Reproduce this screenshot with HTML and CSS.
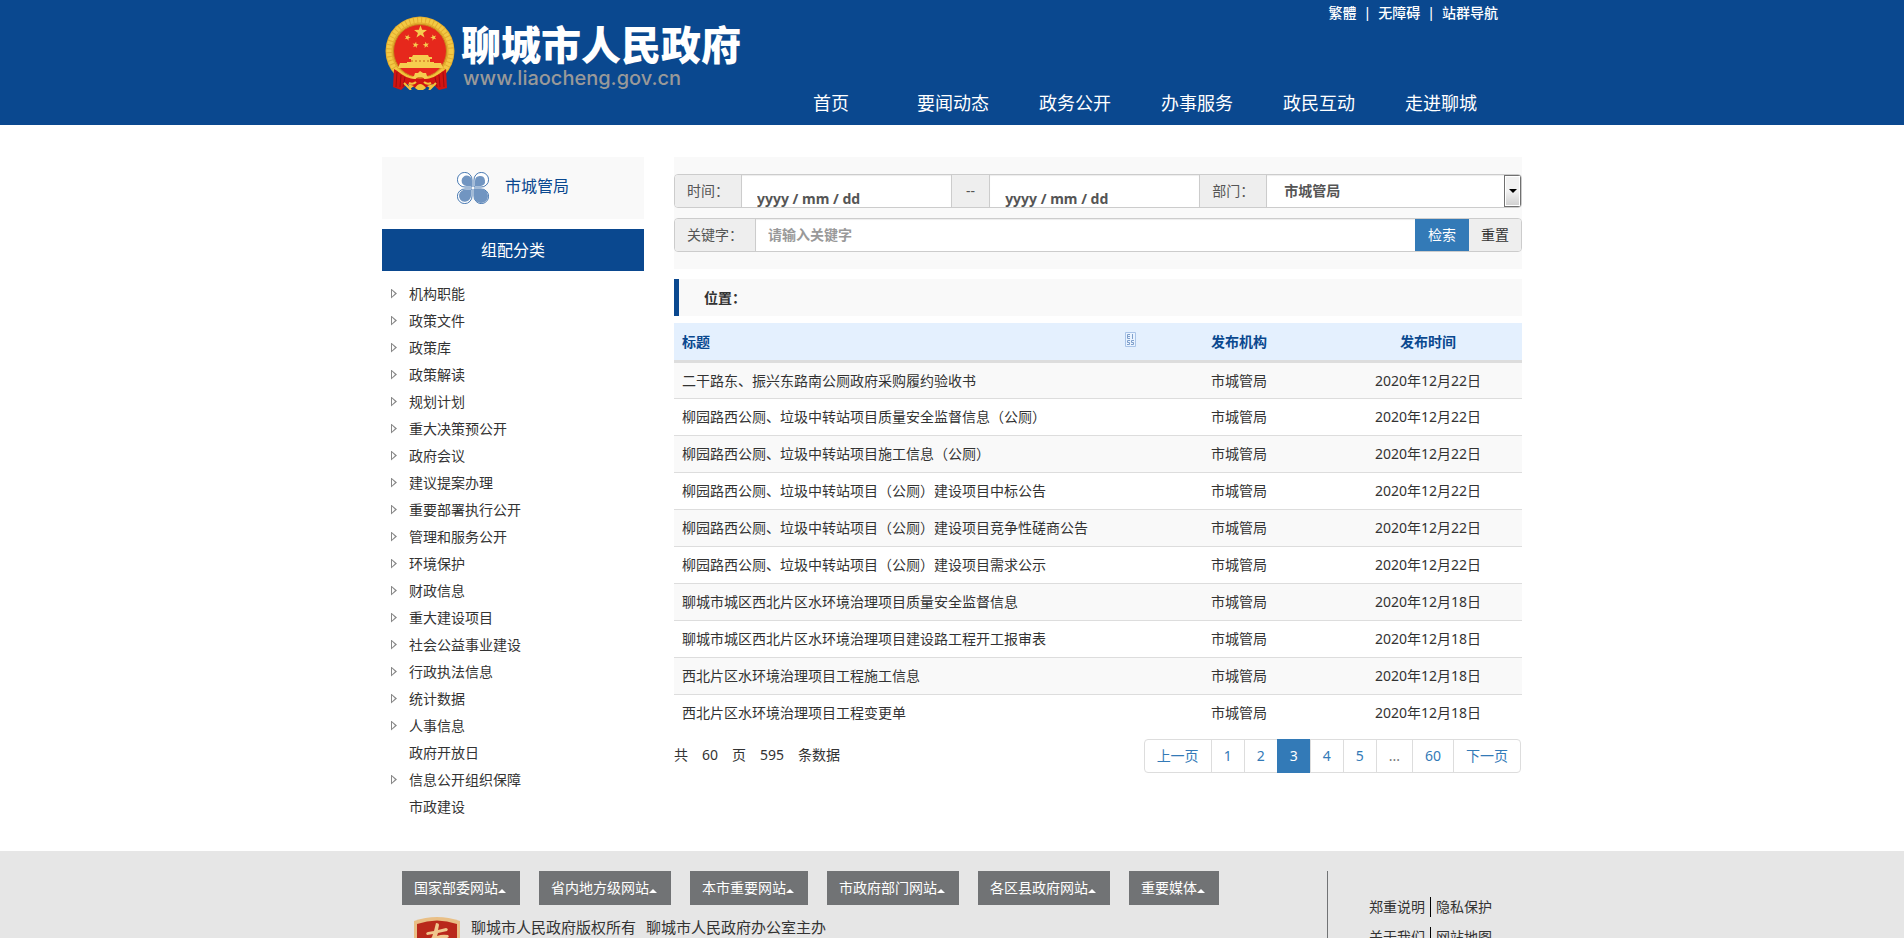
FILE: index.html
```html
<!DOCTYPE html>
<html lang="zh-CN">
<head>
    <meta charset="UTF-8">
    <meta name="viewport" content="width=device-width, initial-scale=1.0">
    <title>聊城市人民政府 - 市城管局</title>
    <link rel="stylesheet" href="styles.css">
</head>
<body>
    <header class="header">
        <div class="container header-inner">
            <a class="logo" href="#">
                <svg class="emblem" viewBox="0 0 70 74" aria-hidden="true">
                    <defs>
                        <path id="star" d="M0-10 2.4-3.2 9.5-3.1 3.8 1.3 5.9 8.1 0 4-5.9 8.1-3.8 1.3-9.5-3.1-2.4-3.2z"/>
                    </defs>
                    <circle cx="35" cy="35" r="34.5" fill="#e3ac2f"/>
                    <circle cx="35" cy="35" r="31" fill="none" stroke="#f3c944" stroke-width="5" stroke-dasharray="3 1"/>
                    <circle cx="35" cy="35" r="26.5" fill="#e6281c" stroke="#c98a1c"/>
                    <g fill="#f6cd4f">
                        <use href="#star" transform="translate(35.5 16) scale(.68)"/>
                        <use href="#star" transform="translate(22.5 21.5) rotate(20) scale(.33)"/>
                        <use href="#star" transform="translate(48.5 21.5) rotate(-20) scale(.33)"/>
                        <use href="#star" transform="translate(30.5 29) rotate(10) scale(.33)"/>
                        <use href="#star" transform="translate(41 29) rotate(-10) scale(.33)"/>
                        <path d="M28 39h15l1 2h3v2H24v-2h3zM26 43h19v3h4v2H22v-2h4zM15 47h41l2 5H13z"/>
                    </g>
                    <path d="M26 45h19" stroke="#c8601c" stroke-dasharray="2 2"/>
                    <path d="M9 53q6 4 13 7 13 5 27 0 7-3 12-7l1 19-8 2-6-6-13 6-13-6-6 6-8-3z" fill="#d11512"/>
                    <path d="M12 56l-1 15M16 59l-1 12M20 61l-2 10M58 56l1 15M54 59l1 12M50 61l2 10" stroke="#9d0e10"/>
                    <path d="M12 53q9 9 19 9M58 53q-9 9-19 9M24 67q4 2 7-1M46 67q-4 2-7-1M19 67l7 7M51 67l-7 7" fill="none" stroke="#f3c33c" stroke-width="2"/>
                    <path d="M29 60l1-3 3 0 2-2 3 2 3 0 1 3 2 2-4 1-3-2h-4l-3 2-4-1z" fill="#f6cd4f"/>
                    <path d="M30 72q5-8 11 0l-3 2h-5zM23 68l6 2-4 3zM48 68l-6 2 4 3z" fill="#f3c33c"/>
                </svg>
                <span class="logo-text">
                    <strong>聊城市人民政府</strong>
                    <em>www.liaocheng.gov.cn</em>
                </span>
            </a>
            <div class="header-right">
                <div class="top-links">
                    <a href="#">繁體</a><span>|</span><a href="#">无障碍</a><span>|</span><a href="#">站群导航</a>
                </div>
                <nav class="main-nav">
                    <a href="#">首页</a>
                    <a href="#">要闻动态</a>
                    <a href="#">政务公开</a>
                    <a href="#">办事服务</a>
                    <a href="#">政民互动</a>
                    <a href="#">走进聊城</a>
                </nav>
            </div>
        </div>
    </header>

    <div class="container content">
        <aside class="sidebar">
            <div class="dept">
                <svg class="clover" viewBox="0 0 32 32" aria-hidden="true">
                    <defs>
                        <g id="petal">
                            <path d="M15 15H8A7.3 7.3 0 1 1 15 8z" fill="#fff" stroke="#4b7bb3"/>
                        </g>
                    </defs>
                    <use href="#petal"/>
                    <use href="#petal" transform="matrix(-1 0 0 1 32 0)"/>
                    <use href="#petal" transform="matrix(1 0 0 -1 0 32)"/>
                    <use href="#petal" transform="matrix(-1 0 0 -1 32 32)"/>
                    <g fill="#7195c1">
                        <path d="M15 14H9.500A5.200 5.200 0 1 1 15 9z"/>
                        <path d="M18 14h6a5 5 0 1 0-6-5z"/>
                        <path d="M14 18H9.500A6 6 0 1 0 14 24z"/>
                        <path d="M17 17h7A7 7 0 1 1 17 24z"/>
                    </g>
                </svg>
                <span>市城管局</span>
            </div>
            <h2 class="side-title">组配分类</h2>
            <ul class="side-list">
                <li class="has-sub"><a href="#">机构职能</a></li>
                <li class="has-sub"><a href="#">政策文件</a></li>
                <li class="has-sub"><a href="#">政策库</a></li>
                <li class="has-sub"><a href="#">政策解读</a></li>
                <li class="has-sub"><a href="#">规划计划</a></li>
                <li class="has-sub"><a href="#">重大决策预公开</a></li>
                <li class="has-sub"><a href="#">政府会议</a></li>
                <li class="has-sub"><a href="#">建议提案办理</a></li>
                <li class="has-sub"><a href="#">重要部署执行公开</a></li>
                <li class="has-sub"><a href="#">管理和服务公开</a></li>
                <li class="has-sub"><a href="#">环境保护</a></li>
                <li class="has-sub"><a href="#">财政信息</a></li>
                <li class="has-sub"><a href="#">重大建设项目</a></li>
                <li class="has-sub"><a href="#">社会公益事业建设</a></li>
                <li class="has-sub"><a href="#">行政执法信息</a></li>
                <li class="has-sub"><a href="#">统计数据</a></li>
                <li class="has-sub"><a href="#">人事信息</a></li>
                <li><a href="#">政府开放日</a></li>
                <li class="has-sub"><a href="#">信息公开组织保障</a></li>
                <li><a href="#">市政建设</a></li>
            </ul>
        </aside>

        <main class="main">
            <form class="search">
                <div class="input-group">
                    <label class="addon" for="startDate">时间：</label>
                    <input class="date" type="text" id="startDate" placeholder="yyyy / mm / dd">
                    <label class="addon addon-to" for="endDate">--</label>
                    <input class="date" type="text" id="endDate" placeholder="yyyy / mm / dd">
                    <label class="addon" for="dept">部门：</label>
                    <div class="select-box">
                        <select id="dept">
                            <option>市城管局</option>
                        </select>
                        <span class="select-arrow"></span>
                    </div>
                </div>
                <div class="input-group">
                    <label class="addon" for="keyword">关键字：</label>
                    <input class="keyword" type="text" id="keyword" placeholder="请输入关键字">
                    <button class="btn-search" type="button">检索</button>
                    <button class="btn-reset" type="reset">重置</button>
                </div>
            </form>

            <div class="position">位置：</div>

            <table class="list">
                <thead>
                    <tr>
                        <th class="col-title">
                            <div class="th-title">
                                <span>标题</span>
                                <svg class="code-icon" viewBox="0 0 11 15" aria-hidden="true">
                                    <path d="M.5.500h10v14H.5z" fill="#e9f3ff" stroke="#a9c4e8"/>
                                    <path d="M5 2.500H2.500v4H5M2.500 4.500H5M7.500 2v5M5 8.500H2.500v2h2v2H2M9 8.500H6.500v2h2v2H6" fill="none" stroke="#7e9fcb"/>
                                </svg>
                            </div>
                        </th>
                        <th class="col-org">发布机构</th>
                        <th class="col-date">发布时间</th>
                    </tr>
                </thead>
                <tbody>
                    <tr><td><a href="#">二干路东、振兴东路南公厕政府采购履约验收书</a></td><td>市城管局</td><td>2020年12月22日</td></tr>
                    <tr><td><a href="#">柳园路西公厕、垃圾中转站项目质量安全监督信息（公厕）</a></td><td>市城管局</td><td>2020年12月22日</td></tr>
                    <tr><td><a href="#">柳园路西公厕、垃圾中转站项目施工信息（公厕）</a></td><td>市城管局</td><td>2020年12月22日</td></tr>
                    <tr><td><a href="#">柳园路西公厕、垃圾中转站项目（公厕）建设项目中标公告</a></td><td>市城管局</td><td>2020年12月22日</td></tr>
                    <tr><td><a href="#">柳园路西公厕、垃圾中转站项目（公厕）建设项目竞争性磋商公告</a></td><td>市城管局</td><td>2020年12月22日</td></tr>
                    <tr><td><a href="#">柳园路西公厕、垃圾中转站项目（公厕）建设项目需求公示</a></td><td>市城管局</td><td>2020年12月22日</td></tr>
                    <tr><td><a href="#">聊城市城区西北片区水环境治理项目质量安全监督信息</a></td><td>市城管局</td><td>2020年12月18日</td></tr>
                    <tr><td><a href="#">聊城市城区西北片区水环境治理项目建设路工程开工报审表</a></td><td>市城管局</td><td>2020年12月18日</td></tr>
                    <tr><td><a href="#">西北片区水环境治理项目工程施工信息</a></td><td>市城管局</td><td>2020年12月18日</td></tr>
                    <tr><td><a href="#">西北片区水环境治理项目工程变更单</a></td><td>市城管局</td><td>2020年12月18日</td></tr>
                </tbody>
            </table>

            <div class="page-bar">
                <div class="total"><span>共</span><span>60</span><span>页</span><span>595</span><span>条数据</span></div>
                <div class="pagination">
                    <a href="#">上一页</a>
                    <a href="#">1</a>
                    <a href="#">2</a>
                    <a class="active" href="#">3</a>
                    <a href="#">4</a>
                    <a href="#">5</a>
                    <span>...</span>
                    <a href="#">60</a>
                    <a href="#">下一页</a>
                </div>
            </div>
        </main>
    </div>

    <footer class="footer">
        <div class="container footer-inner">
            <div class="footer-left">
                <div class="site-links">
                    <button type="button">国家部委网站<i class="caret"></i></button>
                    <button type="button">省内地方级网站<i class="caret"></i></button>
                    <button type="button">本市重要网站<i class="caret"></i></button>
                    <button type="button">市政府部门网站<i class="caret"></i></button>
                    <button type="button">各区县政府网站<i class="caret"></i></button>
                    <button type="button">重要媒体<i class="caret"></i></button>
                </div>
                <div class="copyright">
                    <svg class="badge" viewBox="0 0 46 56" aria-hidden="true">
                        <path d="M0 4Q23-4 46 4V34Q44 48 23 56 2 48 0 34z" fill="#e9bf86"/>
                        <path d="M3 7Q23 0 43 7V33Q41 45 23 52 5 45 3 33z" fill="#b9281b"/>
                        <path d="M22 6q3 0 3 2l-1 5 8-2q3 1 1 3l-9 2-1 3q5-2 11-1 2 2-1 3l-4 2q-2-2-6-2l-2 1q-6 3-8 10-1-6 5-12l1-3-6 1q-2-2 1-3l6-1z" fill="#efc68d"/>
                    </svg>
                    <p><span>聊城市人民政府版权所有</span><span>聊城市人民政府办公室主办</span></p>
                </div>
            </div>
            <div class="footer-right">
                <div><a href="#">郑重说明</a><a href="#">隐私保护</a></div>
                <div><a href="#">关于我们</a><a href="#">网站地图</a></div>
            </div>
        </div>
    </footer>
</body>
</html>
```
FILE: styles.css
```css
* {
    box-sizing: border-box;
}

body {
    margin: 0;
    font-family: "Noto Sans", "Noto Sans CJK SC", sans-serif;
    font-size: 14px;
    line-height: 20px;
    color: #333;
    background-color: #fff;
}

a {
    color: inherit;
    text-decoration: none;
}

input, select, button {
    font-family: inherit;
    font-size: 14px;
    line-height: 20px;
}

.container {
    max-width: 1140px;
    margin: 0 auto;
}

/* header */
.header {
    background-color: #0a488f;
    color: #fff;
}

.header-inner {
    display: flex;
    justify-content: space-between;
    min-height: 125px;
}

.logo {
    display: flex;
    gap: 6px;
    padding: 16px 0 0 3px;
}

.emblem {
    width: 70px;
    height: 74px;
}

.logo-text {
    display: flex;
    flex-direction: column;
    padding-top: 6px;
}

.logo-text strong {
    font-family: "Noto Sans CJK SC", sans-serif;
    font-size: 40px;
    line-height: 42px;
    font-weight: 900;
}

.logo-text em {
    font-family: Inter, sans-serif;
    font-size: 20px;
    line-height: 28px;
    font-style: normal;
    font-weight: 500;
    color: #999;
    padding-left: 2px;
}

.header-right {
    display: flex;
    flex-direction: column;
    justify-content: space-between;
    width: 752px;
    padding: 3px 20px 10px 0;
}

.top-links {
    display: flex;
    justify-content: flex-end;
    gap: 7px;
    padding-right: 4px;
    font-weight: 500;
}

.main-nav {
    display: flex;
    font-size: 18px;
    line-height: 24px;
}

.main-nav a {
    flex: 1;
    text-align: center;
}

/* content */
.content {
    display: flex;
    gap: 30px;
    padding: 32px 0 31px;
}

.sidebar {
    flex: 0 0 262px;
}

.dept {
    display: flex;
    justify-content: center;
    gap: 16px;
    padding: 15px 0;
    background-color: #f9f9f9;
    color: #0a488f;
    font-size: 16px;
    line-height: 28px;
}

.clover {
    width: 32px;
    height: 32px;
}

.side-title {
    margin: 10px 0 9px;
    background-color: #0a488f;
    color: #fff;
    font-size: 16px;
    line-height: 42px;
    font-weight: normal;
    text-align: center;
}

.side-list {
    margin: 0;
    padding: 0;
    list-style: none;
}

.side-list li {
    display: flex;
    align-items: center;
    height: 27px;
    padding-left: 27px;
}

.side-list .has-sub {
    padding-left: 9px;
}

/* hollow triangle */
.has-sub::before {
    content: "";
    width: 6px;
    height: 10px;
    margin-right: 12px;
    background-color: #888;
    clip-path: polygon(evenodd, 0 0, 6px 5px, 0 10px, 0 0, 1px 2px, 1px 8px, 4px 5px, 1px 2px);
}

.main {
    flex: 1;
    min-width: 0;
}

/* search form */
.search {
    display: flex;
    flex-direction: column;
    gap: 10px;
    padding: 17px 0;
    background-color: #f9f9f9;
}

.input-group {
    display: flex;
    height: 34px;
    border: 1px solid #ccc;
    border-radius: 4px;
    overflow: hidden;
}

/* the TC font centers the full-width colon */
.addon, .position {
    font-family: "Noto Sans", "Noto Sans CJK TC", sans-serif;
}

.addon {
    padding: 6px 12px;
    background-color: #eee;
    color: #555;
    border-right: 1px solid #ccc;
}

.addon-to {
    padding: 6px 14px;
}

.input-group input {
    flex: 1;
    min-width: 0;
    border: 0;
    border-right: 1px solid #ccc;
    background-color: #fff;
    color: #555;
    font-weight: bold;
    box-shadow: inset 0 1px 1px rgba(0, 0, 0, 0.075);
}

.input-group .date {
    padding: 16px 15px 0;
}

.date::placeholder {
    color: #555;
    opacity: 1;
}

.input-group .keyword {
    padding: 0 12px;
}

.keyword::placeholder {
    color: #999;
    opacity: 1;
}

.select-box {
    position: relative;
    flex: 0 0 30%;
}

.select-box select {
    width: 100%;
    height: 100%;
    padding: 0 30px 0 17px;
    border: 0;
    appearance: none;
    background-color: #fff;
    color: #555;
    font-weight: bold;
    box-shadow: inset 0 1px 1px rgba(0, 0, 0, 0.075);
}

.select-arrow {
    position: absolute;
    top: 0;
    right: 0;
    width: 17px;
    height: 32px;
    border: 1px solid #707070;
    box-shadow: inset 0 0 0 1px #fff;
    background: linear-gradient(#f2f2f2 50%, #cfcfcf);
    pointer-events: none;
}

.select-arrow::after {
    content: "";
    position: absolute;
    top: 13px;
    left: 4px;
    border: 4px solid transparent;
    border-top-color: #000;
    border-bottom: 0;
}

.btn-search, .btn-reset {
    border: 0;
    margin: 0;
    padding: 0 12px;
    cursor: pointer;
}

.btn-search {
    margin: -1px 0 -1px -1px;
    padding: 0 13px;
    background-color: #337ab7;
    color: #fff;
}

.btn-reset {
    background-color: #eee;
    color: #333;
}

.position {
    margin: 10px 0 7px;
    padding-left: 25px;
    border-left: 5px solid #0a488f;
    background-color: #f9f9f9;
    font-weight: bold;
    line-height: 37px;
}

/* list */
.list {
    width: 100%;
    border-collapse: collapse;
    table-layout: fixed;
}

.list th {
    height: 38px;
    padding: 1px 8px 0;
    background-color: #e4f0fe;
    color: #0a488f;
    border-bottom: 3px solid #ddd;
}

.list td {
    height: 37px;
    padding: 1px 8px 0;
    text-align: center;
    border-top: 1px solid #ddd;
}

.list td:first-child {
    text-align: left;
}

.list tbody tr:nth-child(odd) {
    background-color: #f9f9f9;
}

.list tbody tr:first-child td {
    border-top: 0;
}

.col-org {
    width: 190px;
}

.col-date {
    width: 188px;
}

.th-title {
    display: flex;
    justify-content: space-between;
}

.code-icon {
    width: 11px;
    height: 15px;
}

.page-bar {
    display: flex;
    justify-content: space-between;
    padding-top: 8px;
}

.total {
    display: flex;
    gap: 14px;
    padding-top: 6px;
}

.pagination {
    display: flex;
    margin-right: 1px;
    border: 1px solid #ddd;
    border-radius: 4px;
}

.pagination a, .pagination span {
    padding: 6px 12px;
    border-left: 1px solid #ddd;
    color: #337ab7;
}

.pagination a:first-child {
    border-left: 0;
}

.pagination span {
    color: #777;
}

.pagination .active {
    margin: -1px 0;
    padding: 7px 12px;
    background-color: #337ab7;
    border-color: #337ab7;
    color: #fff;
}

/* footer */
.footer {
    background-color: #e6e6e6;
}

.footer-inner {
    display: flex;
    justify-content: space-between;
    padding: 20px 0 20px 20px;
}

.site-links {
    display: flex;
    gap: 19px;
}

.site-links button {
    display: flex;
    align-items: center;
    height: 34px;
    padding: 0 14px 0 12px;
    border: 0;
    background-color: #717375;
    color: #fff;
    cursor: pointer;
}

.caret {
    margin-top: 6px;
    border: 4px solid transparent;
    border-bottom-color: #fff;
    border-top: 0;
}

.copyright {
    display: flex;
    gap: 11px;
    padding: 12px 0 0 12px;
}

.badge {
    width: 46px;
    height: 56px;
}

.copyright p {
    display: flex;
    gap: 10px;
    margin: 0;
    font-size: 15px;
}

.footer-right {
    width: 195px;
    padding: 26px 0 0 41px;
    border-left: 1px solid #717375;
}

.footer-right div {
    display: flex;
    margin-bottom: 10px;
}

.footer-right a + a {
    margin-left: 5px;
    padding-left: 5px;
    border-left: 1px solid #000;
}
```
